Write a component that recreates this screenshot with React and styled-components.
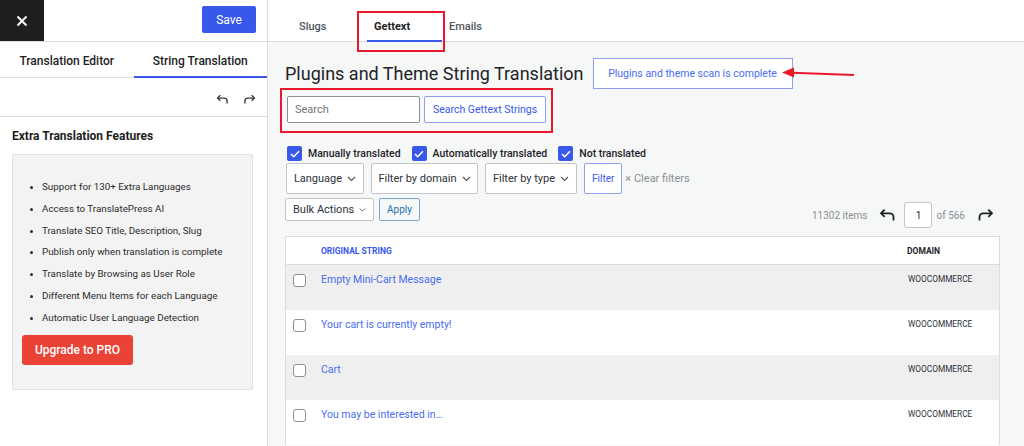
import React from "react";
import styled, { createGlobalStyle } from "styled-components";

const Global = createGlobalStyle`
  html, body { margin: 0; padding: 0; }
  body { font-family: Roboto, "Noto Sans", Arial, sans-serif; color: #1d2327; background: #fff; }
  * { box-sizing: border-box; }
`;

const Page = styled.div`
  display: flex;
  width: 1024px;
  height: 446px;
  overflow: hidden;
`;

/* ---------- Sidebar ---------- */
const Sidebar = styled.aside`
  width: 268px;
  flex: none;
  background: #fff;
  border-right: 1px solid #dcdcde;
  display: flex;
  flex-direction: column;
`;

const SideTop = styled.div`
  height: 42px;
  display: flex;
  align-items: flex-start;
  justify-content: space-between;
  border-bottom: 1px solid #dcdcde;
`;

const CloseBox = styled.div`
  width: 44px;
  height: 41px;
  background: #1e1e1e;
  display: flex;
  align-items: center;
  justify-content: center;
`;

const SaveButton = styled.button`
  margin: 6px 11px 0 0;
  width: 54px;
  height: 27px;
  border: none;
  border-radius: 2px;
  background: #3858e9;
  color: #fff;
  font-family: inherit;
  font-size: 12px;
`;

const SideTabs = styled.div`
  display: flex;
  height: 36px;
  border-bottom: 1px solid #dcdcde;
`;

const SideTab = styled.div`
  flex: 1;
  display: flex;
  align-items: center;
  justify-content: center;
  padding-top: 3px;
  font-size: 12px;
  font-weight: 500;
  color: #1e1e1e;
  border-bottom: 2px solid ${(p) => (p.$active ? "#3858e9" : "transparent")};
  margin-bottom: -1px;
`;

const UndoRow = styled.div`
  height: 39px;
  display: flex;
  align-items: center;
  justify-content: flex-end;
  gap: 14px;
  padding: 4px 11px 0 0;
  border-bottom: 1px solid #dcdcde;
`;

const SideSection = styled.div`
  padding: 11px 12px 0 12px;
`;

const SideTitle = styled.h3`
  margin: 0;
  font-size: 12px;
  font-weight: 700;
  color: #1e1e1e;
  line-height: 16px;
`;

const ProBox = styled.div`
  margin-top: 10px;
  width: 241px;
  height: 236px;
  background: #f3f3f3;
  border: 1px solid #e2e2e2;
  padding: 21px 0 0 9px;
`;

const FeatureList = styled.ul`
  margin: 0;
  padding-left: 20px;
  list-style: disc;
`;

const Feature = styled.li`
  font-size: 9.8px;
  line-height: 21.8px;
  color: #2c2c2c;
  &::marker { font-size: 9px; }
`;

const UpgradeButton = styled.button`
  margin-top: 6px;
  width: 111px;
  height: 30px;
  border: none;
  border-radius: 3px;
  background: #ea4335;
  color: #fff;
  font-family: inherit;
  font-size: 12px;
  font-weight: 500;
`;

/* ---------- Main ---------- */
const Main = styled.main`
  flex: 1;
  background: #f6f7f7;
  display: flex;
  flex-direction: column;
  position: relative;
`;

const MainHeader = styled.div`
  height: 42px;
  background: #fff;
  border-bottom: 1px solid #dcdcde;
  display: flex;
  padding-left: 24px;
`;

const MainTab = styled.div`
  position: relative;
  width: 75px;
  padding: 12px 0 0 7px;
  display: flex;
  align-items: center;
  font-size: 11px;
  font-weight: ${(p) => (p.$active ? 700 : 500)};
  color: ${(p) => (p.$active ? "#1e1e1e" : "#50575e")};
  border-bottom: 2px solid ${(p) => (p.$active ? "#3858e9" : "transparent")};
  margin-bottom: -1px;
`;

const Highlight = styled.div`
  position: absolute;
  border: 2px solid #e8192c;
  pointer-events: none;
`;

const Content = styled.div`
  padding: 0 24px 0 17px;
  display: flex;
  flex-direction: column;
`;

const TitleRow = styled.div`
  display: flex;
  align-items: center;
  gap: 9px;
  margin-top: 16px;
  position: relative;
`;

const PageTitle = styled.h1`
  margin: 0;
  font-size: 18px;
  font-weight: 400;
  color: #1d2327;
  line-height: 30px;
`;

const Notice = styled.div`
  width: 200px;
  height: 31px;
  background: #fff;
  border: 1px solid #8da0f5;
  display: flex;
  align-items: center;
  justify-content: center;
  font-size: 10.5px;
  color: #4a6cf0;
`;

const ArrowOverlay = styled.svg`
  position: absolute;
  left: 495px;
  top: 7px;
  overflow: visible;
`;

const SearchRow = styled.div`
  position: relative;
  display: flex;
  gap: 4px;
  margin-top: 7px;
  padding-left: 2px;
`;

const SearchInput = styled.div`
  width: 133px;
  height: 27px;
  background: #fff;
  border: 1px solid #8c8f94;
  border-radius: 2px;
  display: flex;
  align-items: center;
  padding-left: 7px;
  font-size: 11px;
  color: #757575;
`;

const OutlineButton = styled.button`
  height: ${(p) => p.$h || 27}px;
  padding: 0 ${(p) => p.$px || 8}px;
  background: ${(p) => p.$bg || "#fff"};
  border: 1px solid ${(p) => p.$border || "#8da0f5"};
  border-radius: 2px;
  color: ${(p) => p.$color || "#3858e9"};
  font-family: inherit;
  font-size: ${(p) => p.$fs || 10.5}px;
  white-space: nowrap;
`;

const CheckRow = styled.div`
  display: flex;
  align-items: center;
  gap: 11px;
  margin-top: 23px;
  padding-left: 2px;
`;

const CheckItem = styled.label`
  display: flex;
  align-items: center;
  gap: 6px;
  font-size: 10.5px;
  font-weight: 500;
  color: #1d2327;
`;

const CheckBoxOn = styled.span`
  width: 15px;
  height: 15px;
  background: #3858e9;
  border-radius: 2px;
  display: flex;
  align-items: center;
  justify-content: center;
`;

const FilterRow = styled.div`
  display: flex;
  align-items: center;
  gap: 7px;
  margin-top: 2px;
  padding-left: 1px;
`;

const Select = styled.div`
  width: ${(p) => p.$w}px;
  height: ${(p) => p.$h || 31}px;
  background: #fff;
  border: 1px solid #c3c4c7;
  border-radius: 2px;
  display: flex;
  align-items: center;
  justify-content: ${(p) => (p.$spread ? "space-between" : "center")};
  gap: 5px;
  padding: 0 ${(p) => (p.$spread ? 7 : 4)}px;
  font-size: 11px;
  color: #2c3338;
  white-space: nowrap;
`;

const ClearFilters = styled.span`
  font-size: 11px;
  color: #8c8f94;
  margin-left: -4px;
`;

const BulkRow = styled.div`
  display: flex;
  align-items: flex-start;
  justify-content: space-between;
  margin-top: 4px;
`;

const BulkLeft = styled.div`
  display: flex;
  gap: 5px;
`;

const Pager = styled.div`
  display: flex;
  align-items: center;
  gap: 6px;
  margin-top: 4px;
  padding-right: 6px;
`;

const PagerText = styled.span`
  font-size: 10px;
  color: #8c8f94;
  margin-right: ${(p) => p.$mr || 0}px;
`;

const PageInput = styled.div`
  width: 28px;
  height: 26px;
  background: #fff;
  border: 1px solid #c3c4c7;
  border-radius: 3px;
  display: flex;
  align-items: center;
  justify-content: center;
  font-size: 10px;
  color: #1d2327;
  margin: 0 -2px 0 2px;
`;

const Table = styled.div`
  margin-top: 8px;
  background: #fff;
  border: 1px solid #dcdcde;
  border-bottom: none;
`;

const Row = styled.div`
  display: grid;
  grid-template-columns: 35px 1fr 92px;
  height: ${(p) => (p.$head ? 28 : 45)}px;
  background: ${(p) => (p.$shade ? "#efefef" : "#fff")};
  border-bottom: ${(p) => (p.$head ? "1px solid #dcdcde" : "none")};
  align-items: ${(p) => (p.$head ? "center" : "start")};
`;

const HeadCell = styled.div`
  font-size: 8.5px;
  font-weight: 700;
  text-transform: uppercase;
  color: ${(p) => (p.$blue ? "#3858e9" : "#1d2327")};
`;

const RowCheck = styled.span`
  margin: 9px 0 0 7px;
  width: 13px;
  height: 13px;
  border: 1px solid #8c8f94;
  border-radius: 3px;
  background: #fff;
  display: block;
`;

const StringCell = styled.div`
  padding-top: 8px;
  font-size: 10.5px;
  color: #4a6cf0;
`;

const DomainCell = styled.div`
  padding-top: 9px;
  padding-left: 1px;
  font-size: 8.3px;
  color: #2c3338;
  text-transform: uppercase;
`;

const Chevron = () => (
  <svg width="9" height="6" viewBox="0 0 9 6" fill="none">
    <path d="M1 1l3.5 3.5L8 1" stroke="#50575e" strokeWidth="1.2" />
  </svg>
);

const UndoIcon = ({ size = 14, color = "#1e1e1e", flip }) => (
  <svg width={size} height={size * 0.8} viewBox="0 0 15 12" fill="none"
    style={flip ? { transform: "scaleX(-1)" } : undefined}>
    <path d="M5 1.5L1.8 4.7 5 7.9" stroke={color} strokeWidth="1.6" />
    <path d="M2 4.7h7.5a3.3 3.3 0 013.3 3.3v3" stroke={color} strokeWidth="1.6" />
  </svg>
);

const features = [
  "Support for 130+ Extra Languages",
  "Access to TranslatePress AI",
  "Translate SEO Title, Description, Slug",
  "Publish only when translation is complete",
  "Translate by Browsing as User Role",
  "Different Menu Items for each Language",
  "Automatic User Language Detection",
];

const rows = [
  "Empty Mini-Cart Message",
  "Your cart is currently empty!",
  "Cart",
  "You may be interested in…",
];

export default function App() {
  return (
    <>
      <Global />
      <Page>
        <Sidebar>
          <SideTop>
            <CloseBox>
              <svg width="12" height="12" viewBox="0 0 12 12">
                <path d="M1.5 1.5l9 9M10.5 1.5l-9 9" stroke="#fff" strokeWidth="2" />
              </svg>
            </CloseBox>
            <SaveButton>Save</SaveButton>
          </SideTop>
          <SideTabs>
            <SideTab>Translation Editor</SideTab>
            <SideTab $active>String Translation</SideTab>
          </SideTabs>
          <UndoRow>
            <UndoIcon size={13} color="#3c3c3c" />
            <UndoIcon size={13} color="#3c3c3c" flip />
          </UndoRow>
          <SideSection>
            <SideTitle>Extra Translation Features</SideTitle>
            <ProBox>
              <FeatureList>
                {features.map((f) => (
                  <Feature key={f}>{f}</Feature>
                ))}
              </FeatureList>
              <UpgradeButton>Upgrade to PRO</UpgradeButton>
            </ProBox>
          </SideSection>
        </Sidebar>

        <Main>
          <MainHeader>
            <MainTab>Slugs</MainTab>
            <MainTab $active>
              Gettext
              <Highlight style={{ left: -10, top: 11, width: 88, height: 41 }} />
            </MainTab>
            <MainTab>Emails</MainTab>
          </MainHeader>
          <Content>
            <TitleRow>
              <PageTitle>Plugins and Theme String Translation</PageTitle>
              <Notice>Plugins and theme scan is complete</Notice>
              <ArrowOverlay width="76" height="16" viewBox="0 0 76 16">
                <path d="M74 10L12 7.8" stroke="#e8192c" strokeWidth="2" />
                <path d="M2 7.5l12-5v10z" fill="#e8192c" />
              </ArrowOverlay>
            </TitleRow>
            <SearchRow>
              <SearchInput>Search</SearchInput>
              <OutlineButton>Search Gettext Strings</OutlineButton>
              <Highlight style={{ left: -5, top: -8, width: 273, height: 45 }} />
            </SearchRow>
            <CheckRow>
              {["Manually translated", "Automatically translated", "Not translated"].map((l) => (
                <CheckItem key={l}>
                  <CheckBoxOn>
                    <svg width="10" height="8" viewBox="0 0 10 8" fill="none">
                      <path d="M1 4l2.7 2.7L9 1.3" stroke="#fff" strokeWidth="1.6" />
                    </svg>
                  </CheckBoxOn>
                  {l}
                </CheckItem>
              ))}
            </CheckRow>
            <FilterRow>
              <Select $w={78}>Language <Chevron /></Select>
              <Select $w={107}>Filter by domain <Chevron /></Select>
              <Select $w={92}>Filter by type <Chevron /></Select>
              <OutlineButton $h={31} $px={7} $fs={10}>Filter</OutlineButton>
              <ClearFilters>× Clear filters</ClearFilters>
            </FilterRow>
            <BulkRow>
              <BulkLeft>
                <Select $w={89} $h={23} $spread>Bulk Actions <Chevron /></Select>
                <OutlineButton $h={23} $px={7} $fs={10} $bg="#f6f7f7" $border="#7fa6cc" $color="#2271b1">Apply</OutlineButton>
              </BulkLeft>
              <Pager>
                <PagerText $mr={6}>11302 items</PagerText>
                <UndoIcon size={17} color="#1d2327" />
                <PageInput>1</PageInput>
                <PagerText $mr={6}>of 566</PagerText>
                <UndoIcon size={17} color="#1d2327" flip />
              </Pager>
            </BulkRow>
            <Table>
              <Row $head>
                <span />
                <HeadCell $blue>Original String</HeadCell>
                <HeadCell>Domain</HeadCell>
              </Row>
              {rows.map((r, i) => (
                <Row key={r} $shade={i % 2 === 0}>
                  <RowCheck />
                  <StringCell>{r}</StringCell>
                  <DomainCell>WooCommerce</DomainCell>
                </Row>
              ))}
            </Table>
          </Content>
        </Main>
      </Page>
    </>
  );
}
